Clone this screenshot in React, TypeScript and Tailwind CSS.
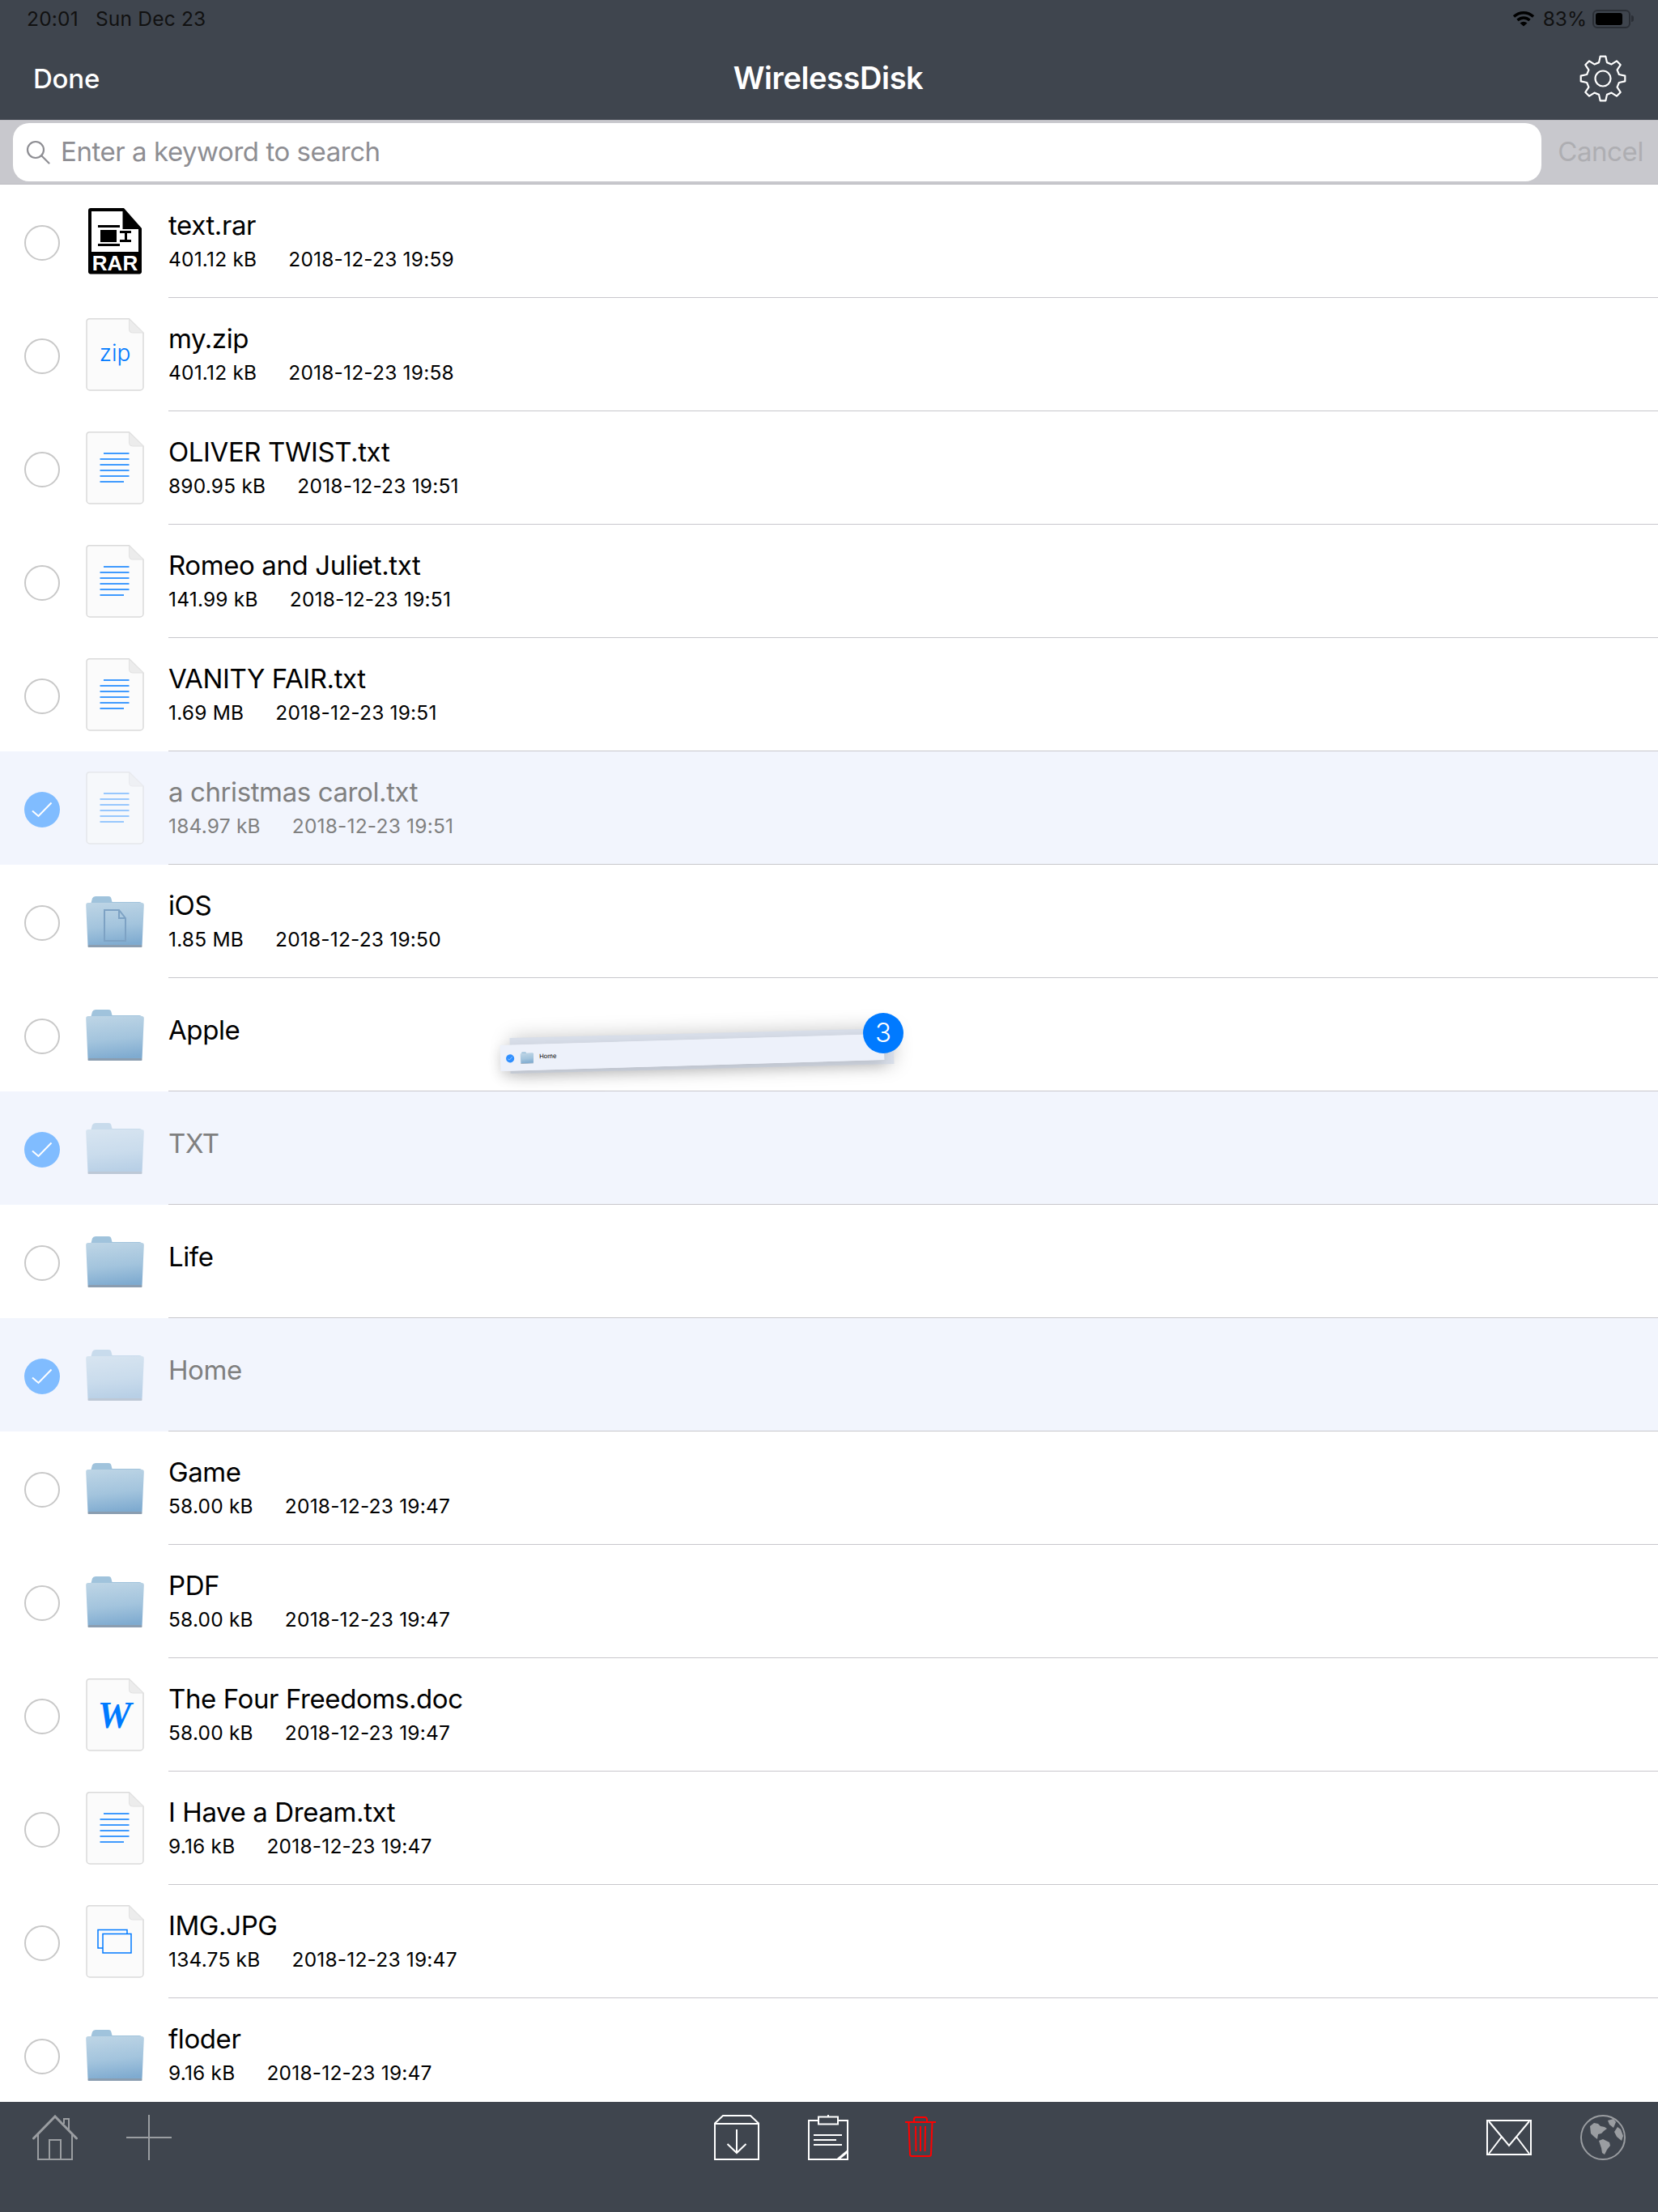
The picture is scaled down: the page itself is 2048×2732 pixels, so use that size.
import React from "react";

type Kind = "rar" | "zip" | "txt" | "doc" | "img" | "folder" | "folderDoc";

interface FileRow {
	name: string;
	size?: string;
	date?: string;
	kind: Kind;
	selected?: boolean;
}

const rows: FileRow[] = [
	{ name: "text.rar", size: "401.12 kB", date: "2018-12-23 19:59", kind: "rar" },
	{ name: "my.zip", size: "401.12 kB", date: "2018-12-23 19:58", kind: "zip" },
	{ name: "OLIVER TWIST.txt", size: "890.95 kB", date: "2018-12-23 19:51", kind: "txt" },
	{ name: "Romeo and Juliet.txt", size: "141.99 kB", date: "2018-12-23 19:51", kind: "txt" },
	{ name: "VANITY FAIR.txt", size: "1.69 MB", date: "2018-12-23 19:51", kind: "txt" },
	{ name: "a christmas carol.txt", size: "184.97 kB", date: "2018-12-23 19:51", kind: "txt", selected: true },
	{ name: "iOS", size: "1.85 MB", date: "2018-12-23 19:50", kind: "folderDoc" },
	{ name: "Apple", kind: "folder" },
	{ name: "TXT", kind: "folder", selected: true },
	{ name: "Life", kind: "folder" },
	{ name: "Home", kind: "folder", selected: true },
	{ name: "Game", size: "58.00 kB", date: "2018-12-23 19:47", kind: "folder" },
	{ name: "PDF", size: "58.00 kB", date: "2018-12-23 19:47", kind: "folder" },
	{ name: "The Four Freedoms.doc", size: "58.00 kB", date: "2018-12-23 19:47", kind: "doc" },
	{ name: "I Have a Dream.txt", size: "9.16 kB", date: "2018-12-23 19:47", kind: "txt" },
	{ name: "IMG.JPG", size: "134.75 kB", date: "2018-12-23 19:47", kind: "img" },
	{ name: "floder", size: "9.16 kB", date: "2018-12-23 19:47", kind: "folder" },
];

const gearPath = () => {
	const pts: string[] = [];
	const at = (deg: number, r: number) => {
		const a = ((deg - 90) * Math.PI) / 180;
		return `${(30 + r * Math.cos(a)).toFixed(2)} ${(30 + r * Math.sin(a)).toFixed(2)}`;
	};
	for (let i = 0; i < 8; i++) {
		const c = i * 45;
		pts.push(at(c - 14, 20.5), at(c - 7, 27.5), at(c + 7, 27.5), at(c + 14, 20.5));
	}
	return `M${pts.join(" L")} Z`;
};

const PageIcon = ({ children }: { children?: React.ReactNode }) => (
	<svg width="72" height="90" viewBox="0 0 72 90" className="block">
		<path
			d="M4 .75H53.5L71 18V85a4 4 0 0 1-4 4H5a4 4 0 0 1-4-4V4A3.5 3.5 0 0 1 4 .75Z"
			fill="#fbfbfb"
			stroke="#dadada"
			strokeWidth="1.5"
		/>
		<path d="M53.5 1V14a4 4 0 0 0 4 4H71Z" fill="#ececec" stroke="#e2e2e2" />
		{children}
	</svg>
);

const FolderIcon = ({ withDoc }: { withDoc?: boolean }) => (
	<svg width="72" height="63" viewBox="0 0 72 63" className="block">
		<defs>
			<linearGradient id="folderBody" x1="0.35" y1="0" x2="0.5" y2="1">
				<stop offset="0" stopColor="#bcd4e5" />
				<stop offset="0.55" stopColor="#a3c4dd" />
				<stop offset="1" stopColor="#7fabd0" />
			</linearGradient>
		</defs>
		<path d="M6 10 8 2.5Q9 0 12 0H28Q31 0 31.500 3L32.500 7H66Q69 7 70 10Z" fill="#a0c3dc" />
		<path d="M3 8H69Q72 8 71.800 11L69.500 60.500H2.500L.2 11Q0 8 3 8Z" fill="url(#folderBody)" />
		<rect x="2.500" y="60" width="67" height="3" rx="1" fill="#8a9db0" />
		{withDoc && (
			<path d="M23 17H41L49 27V55H23Z M41 17V27H49" fill="none" stroke="#7da2c4" strokeWidth="2" />
		)}
	</svg>
);

const TXT_LINES = [
	{ y: 27, x1: 22, x2: 53.5 },
	{ y: 34, x1: 17.5, x2: 53.500 },
	{ y: 41, x1: 17.5, x2: 53.500 },
	{ y: 48, x1: 17.5, x2: 53.500 },
	{ y: 55, x1: 17.5, x2: 53.500 },
	{ y: 62, x1: 17.5, x2: 47 },
];

const FileIcon = ({ kind }: { kind: Kind }) => {
	if (kind === "folder") return <FolderIcon />;
	if (kind === "folderDoc") return <FolderIcon withDoc />;
	if (kind === "rar")
		return (
			<svg width="66" height="82" viewBox="0 0 66 82" className="block">
				<path d="M3 0H44L66 25V78a3 3 0 0 1-3 3.500H3a3 3 0 0 1-3-3.500V3a3 3 0 0 1 3-3Z" fill="#000" />
				<path d="M4 4H42.500V26H62V54H4Z" fill="#fff" />
				<rect x="12" y="21" width="27" height="3" />
				<rect x="15" y="27" width="20" height="15" />
				<rect x="12" y="44" width="27" height="3" />
				<path d="M39 28H53V31H48V39H53V42H39V39H45V31H39Z" />
				<text x="33" y="77" textAnchor="middle" fontFamily="Liberation Sans" fontWeight="700" fontSize="26" fill="#fff">
					RAR
				</text>
			</svg>
		);
	return (
		<PageIcon>
			{kind === "zip" && (
				<text x="36" y="53" textAnchor="middle" fontFamily="Inter" fontWeight="300" fontSize="28" fill="#007aff">
					zip
				</text>
			)}
			{kind === "doc" && (
				<text x="35.500" y="61" textAnchor="middle" fontFamily="Liberation Serif" fontStyle="italic" fontWeight="700" fontSize="47" fill="#007aff">
					W
				</text>
			)}
			{kind === "txt" &&
				TXT_LINES.map((l) => (
					<line key={l.y} x1={l.x1} x2={l.x2} y1={l.y} y2={l.y} stroke="#007aff" strokeWidth="1.500" />
				))}
			{kind === "img" && (
				<g fill="none" stroke="#007aff" strokeWidth="1.500">
					<path d="M21 53H15V30.500H51V35.500" />
					<rect x="21" y="35.500" width="35" height="23.500" />
				</g>
			)}
		</PageIcon>
	);
};

// plain: the small copy of a row that is dragged, no separator and no fading
const Row = ({ row, plain }: { row: FileRow; plain?: boolean }) => (
	<div className={`flex h-[140px] shrink-0 ${plain ? "bg-[#edf1fa]" : row.selected ? "bg-[#f2f5fd]" : "bg-white"}`}>
		<div className="flex w-[106px] items-center pl-[30px] pt-[4px]">
			{row.selected ? (
				<div className={`flex h-[44px] w-[44px] items-center justify-center rounded-full ${plain ? "bg-[#2f8fff]" : "bg-[#80bcff]"}`}>
					<svg width="26" height="20" viewBox="0 0 26 20" fill="none" stroke="#fff" strokeWidth="2">
						<path d="M1 11.500 8.500 18 24.500 1.500" />
					</svg>
				</div>
			) : (
				<div className="h-[44px] w-[44px] rounded-full border-2 border-[#c8c8c8]" />
			)}
		</div>
		<div className={`flex w-[102px] items-center ${row.selected && !plain ? "opacity-50" : ""} ${row.kind === "rar" ? "pl-[3px]" : ""}`}>
			<FileIcon kind={row.kind} />
		</div>
		<div
			className={`flex-1 ${plain ? "" : "border-b border-[#c8c7cc]"} ${row.size ? "pt-[30px]" : "pt-[44px]"} ${row.selected && !plain ? "text-[#808080]" : "text-black"}`}
		>
			<div className="h-[40px] text-[33px] leading-[40px] tracking-[-0.4px]">{row.name}</div>
			{row.size && (
				<div className="mt-[7px] flex h-[30px] gap-[39px] text-[24.5px] leading-[30px] tracking-[0.2px]">
					<span>{row.size}</span>
					<span>{row.date}</span>
				</div>
			)}
		</div>
	</div>
);

const DragPreview = () => (
	<>
		<div className="absolute left-[630px] top-[1048px] h-[44px] w-[474px] rotate-[-1.45deg] bg-[#d9dfea] shadow-[0_0_24px_rgba(0,0,0,0.22)]" />
		<div className="absolute left-[618px] top-[1056px] h-[32px] w-[474px] rotate-[-1.7deg] overflow-hidden bg-[#edf1fa] shadow-[0_6px_16px_rgba(0,0,0,0.15)]">
			<div className="w-[2048px] origin-top-left scale-[0.2314]">
				<Row plain row={{ name: "Home", kind: "folder", selected: true }} />
			</div>
		</div>
		<div className="absolute left-[1066px] top-[1023px] flex h-[50px] w-[50px] items-center justify-center rounded-full bg-[#007aff] text-[33px] font-light text-white">
			3
		</div>
	</>
);

const Toolbar = () => (
	<div className="flex h-[136px] shrink-0 items-start justify-between bg-[#3f454e] pl-[40px] pr-[40px] pt-[16px]">
		<div className="flex gap-[60px]">
			<svg width="56" height="56" viewBox="0 0 56 56" fill="none" stroke="#9a9da1">
				<path d="M1.500 29 28 2 54.500 29" strokeWidth="3" strokeLinecap="round" />
				<path d="M7 23.500V55H49V23.500" strokeWidth="2" />
				<path d="M21 55V31H35V55" strokeWidth="2" />
				<path d="M39 11V5H45V18" strokeWidth="2" />
			</svg>
			<svg width="56" height="56" viewBox="0 0 56 56" stroke="#9a9da1" strokeWidth="2">
				<path d="M28 0V56M0 28H56" />
			</svg>
		</div>
		<div className="mr-[10px] flex">
			<svg width="56" height="56" viewBox="0 0 56 56" fill="none" stroke="#fff" strokeWidth="2">
				<path d="M1 10.500 11 1H45L55 10.500V55H1ZM1 11H55" />
				<path d="M28 18V47M16.500 36 28 47 39.500 36" />
			</svg>
			<svg width="50" height="56" viewBox="0 0 50 56" fill="none" stroke="#fff" strokeWidth="2" className="ml-[60px]">
				<path d="M13 7H1V55H49V7H37" />
				<rect x="13" y="2.500" width="24" height="9" />
				<path d="M25 0V2M7 25H42M7 31H35M7 37H42" />
				<path d="M37 55 49 45" strokeWidth="3" />
			</svg>
			<svg width="38" height="50" viewBox="0 0 38 50" fill="none" stroke="#f00" strokeWidth="2" className="ml-[70px] mt-[2px]">
				<path d="M0 7H38" />
				<path d="M11 7V3.500A2.500 2.500 0 0 1 13.500 1H24.500A2.500 2.500 0 0 1 27 3.500V7" />
				<path d="M4.500 8 6 46.500A2.500 2.500 0 0 0 8.500 49H29.500A2.500 2.500 0 0 0 32 46.500L33.500 8" />
				<path d="M13 12 13.500 43M19 12V43M25 12 24.500 43" />
			</svg>
		</div>
		<div className="flex items-start gap-[60px]">
			<svg width="56" height="44" viewBox="0 0 56 44" fill="none" stroke="#fff" strokeWidth="2" className="mt-[6px]">
				<rect x="1" y="1" width="54" height="42" />
				<path d="M3 2 28 32 53 2M3 42 19 21M53 42 37 21" />
			</svg>
			<svg width="56" height="56" viewBox="0 0 56 56">
				<circle cx="28" cy="28" r="27" fill="none" stroke="#9a9da1" strokeWidth="2" />
				<g fill="#9a9da1">
					<path d="M12 14 17 10 22 11 25 14 30 15 33 17 29 20 26 23 22 24 21 30 17 27 13 23Z" />
					<path d="M23 32 28 30 36 34 37 38 33 43 30 49 27 47 26 41Z" />
					<path d="M34 7 41 5 44 9 41 16 36 12Z" />
					<path d="M46 15 50 18 53 26 51 32 45 27 42 21Z" />
				</g>
			</svg>
		</div>
	</div>
);

export default function App() {
	return (
		<div className="flex h-[2732px] w-[2048px] flex-col overflow-hidden bg-white font-['Inter',sans-serif]">
			<div className="h-[148px] shrink-0 bg-[#3f454e]">
				<div className="flex h-[46px] items-center justify-between pl-[33px] pr-[30px] text-[24.5px] text-[#111]">
					<div className="flex gap-[21px] tracking-[0.2px]">
						<span>20:01</span>
						<span>Sun Dec 23</span>
					</div>
					<div className="flex items-center gap-[7px]">
						<svg width="28" height="20" viewBox="0 0 28 20" fill="none" stroke="#000" strokeWidth="3.500" className="mr-[3px]">
							<path d="M2 7.500C9 1 19 1 26 7.500" />
							<path d="M6.500 12C11 8 17 8 21.500 12" />
							<path d="M14 19.500 9.500 15.500Q14 12 18.500 15.500Z" fill="#000" stroke="none" />
						</svg>
						<span>83%</span>
						<div className="flex items-center gap-[1px]">
							<div className="flex h-[23px] w-[47px] items-center rounded-[6px] border-2 border-[#2a2e35] pl-[2px]">
								<div className="h-[15px] w-[33px] rounded-[3px] bg-black" />
							</div>
							<div className="h-[8px] w-[3px] rounded-r-[3px] bg-[#2a2e35]" />
						</div>
					</div>
				</div>
				<div className="relative flex h-[102px] items-center justify-between pl-[41px] pr-[38px]">
					<span className="pt-[2px] text-[33px] font-medium tracking-[-0.2px] text-white">Done</span>
					<span className="absolute left-[895px] w-[256px] pb-[2px] text-center text-[38px] font-semibold tracking-[-0.4px] text-white">
						WirelessDisk
					</span>
					<svg width="60" height="60" viewBox="0 0 60 60" fill="none" stroke="#fff" strokeWidth="2.200" strokeLinejoin="round">
						<path d={gearPath()} />
						<circle cx="30" cy="30" r="9.500" />
					</svg>
				</div>
			</div>
			<div className="flex h-[80px] shrink-0 items-center border-y border-[#bdbdc2] bg-[#c8c8cd] pl-[16px] pr-[18px]">
				<div className="flex h-[72px] w-[1888px] items-center rounded-[20px] bg-white pl-[16px]">
					<svg width="30" height="30" viewBox="0 0 30 30" fill="none" stroke="#8e8e93" strokeWidth="2.200">
						<circle cx="12" cy="12" r="10" />
						<path d="M19 19 28.500 28.500" strokeLinecap="round" />
					</svg>
					<span className="ml-[13px] text-[33px] tracking-[-0.45px] text-[#8e8e93]">Enter a keyword to search</span>
				</div>
				<span className="ml-auto text-[33px] tracking-[-0.4px] text-[#aeaeb2]">Cancel</span>
			</div>
			<div className="relative flex min-h-0 flex-1 flex-col overflow-hidden">
				{rows.map((row) => (
					<Row key={row.name} row={row} />
				))}
				<DragPreview />
			</div>
			<Toolbar />
		</div>
	);
}
